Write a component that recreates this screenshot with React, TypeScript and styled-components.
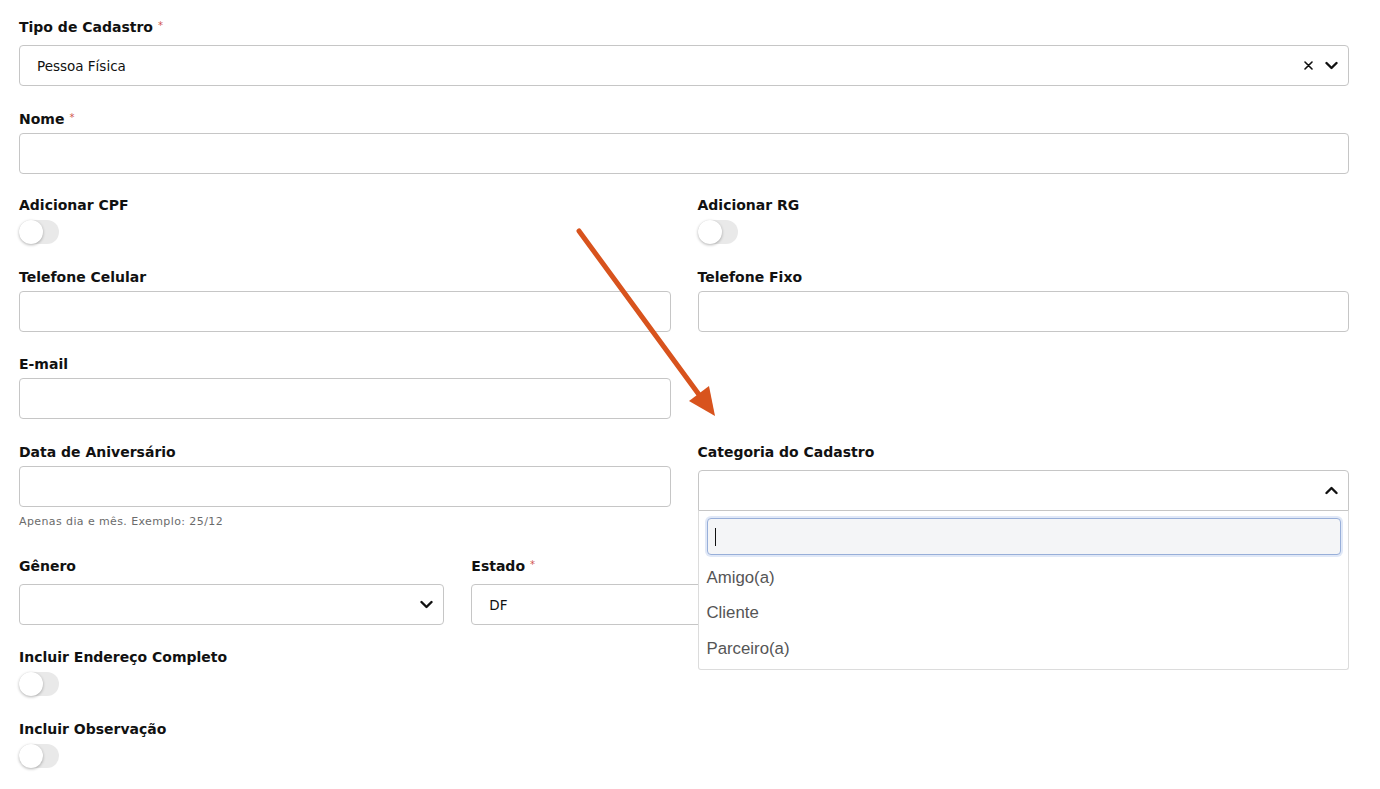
import React from 'react'
import styled, { createGlobalStyle } from 'styled-components'

const GlobalStyle = createGlobalStyle`
  body {
    margin: 0;
    background: #fff;
    font-family: "DejaVu Sans", "Open Sans", sans-serif;
    color: #111;
  }
  * { box-sizing: border-box; }
`

const Page = styled.div`
  position: relative;
  width: 1380px;
  min-height: 789px;
  padding: 17px 31px 0 19px;
`

const Row = styled.div<{ $cols: number }>`
  display: grid;
  grid-template-columns: repeat(${p => p.$cols}, 1fr);
  column-gap: 27px;
`

const Field = styled.div<{ $mb?: number }>`
  display: flex;
  flex-direction: column;
  margin-bottom: ${p => p.$mb ?? 22}px;
`

const Label = styled.label`
  font-size: 14px;
  font-weight: bold;
  line-height: 20px;
  height: 20px;
  margin-bottom: 4px;
  color: #111;
  white-space: nowrap;
`

const Star = styled.span`
  color: #d0534f;
  font-size: 10px;
  font-weight: normal;
  vertical-align: top;
  margin-left: 5px;
  position: relative;
  top: -1px;
`

const TextInput = styled.div`
  height: 41px;
  border: 1px solid #c6c6c6;
  border-radius: 4px;
  background: #fff;
`

const SelectWrap = styled.div`
  position: relative;
  margin-top: 4px;
`

const SelectBox = styled.div<{ $open?: boolean }>`
  height: 41px;
  border: 1px solid #c6c6c6;
  border-radius: ${p => (p.$open ? '4px 4px 0 0' : '4px')};
  background: #fff;
  display: flex;
  align-items: center;
  padding: 0 9px 0 17px;
  font-size: 13.5px;
  color: #111;
`

const Value = styled.span`
  flex: 1;
`

const Clear = styled.span`
  width: 14px;
  display: flex;
  justify-content: center;
  margin-right: 8px;
`

const Chevron = styled.span`
  width: 16px;
  display: flex;
  justify-content: center;
`

const Help = styled.div`
  margin-top: 7px;
  font-size: 11px;
  line-height: 15px;
  letter-spacing: 0.4px;
  color: #6b6b6b;
`

const Toggle = styled.div`
  margin-top: 1px;
  width: 40px;
  height: 24px;
  border-radius: 12px;
  background: #e9e9e9;
  position: relative;
  &::after {
    content: '';
    position: absolute;
    left: 0;
    top: 0;
    width: 24px;
    height: 24px;
    border-radius: 50%;
    background: #fff;
    box-shadow: 0 1px 3px rgba(0, 0, 0, 0.3);
  }
`

const Menu = styled.div`
  position: absolute;
  top: 100%;
  left: 0;
  right: 0;
  z-index: 5;
  background: #fff;
  border: 1px solid #dcdcdc;
  border-top: none;
  border-radius: 0 0 3px 3px;
  padding: 7px 7px 2px 8px;
`

const Search = styled.div`
  height: 37px;
  border: 1px solid #98afd9;
  border-radius: 4px;
  background: #f4f5f7;
  box-shadow: 0 0 0 2px rgba(130, 165, 225, 0.25);
  display: flex;
  align-items: center;
  padding-left: 7px;
  margin-bottom: 5px;
`

const Caret = styled.span`
  width: 1px;
  height: 18px;
  background: #111;
`

const Option = styled.div`
  height: 35.5px;
  display: flex;
  align-items: center;
  font-family: "Liberation Sans", Arial, sans-serif;
  font-size: 16.8px;
  color: #555;
`

const Arrow = styled.svg`
  position: absolute;
  left: 0;
  top: 0;
  pointer-events: none;
`

const ChevronDown = () => (
  <svg width="13" height="9" viewBox="0 0 13 9">
    <path d="M1.5 2 L6.5 7 L11.5 2" fill="none" stroke="#111" strokeWidth="2.4" strokeLinecap="round" strokeLinejoin="round" />
  </svg>
)

const ChevronUp = () => (
  <svg width="13" height="9" viewBox="0 0 13 9">
    <path d="M1.5 7 L6.5 2 L11.5 7" fill="none" stroke="#111" strokeWidth="2.4" strokeLinecap="round" strokeLinejoin="round" />
  </svg>
)

const ClearIcon = () => (
  <svg width="9" height="9" viewBox="0 0 9 9">
    <path d="M1 1 L8 8 M8 1 L1 8" stroke="#111" strokeWidth="1.6" strokeLinecap="round" />
  </svg>
)

type SelectProps = { value?: string; clearable?: boolean; open?: boolean; children?: React.ReactNode }

function Select({ value, clearable, open, children }: SelectProps) {
  return (
    <SelectWrap>
      <SelectBox $open={open}>
        <Value>{value}</Value>
        {clearable && <Clear><ClearIcon /></Clear>}
        <Chevron>{open ? <ChevronUp /> : <ChevronDown />}</Chevron>
      </SelectBox>
      {children}
    </SelectWrap>
  )
}

const categorias = ['Amigo(a)', 'Cliente', 'Parceiro(a)']

export default function App() {
  return (
    <>
      <GlobalStyle />
      <Page>
        <Field $mb={23}>
          <Label>Tipo de Cadastro<Star>*</Star></Label>
          <Select value="Pessoa Física" clearable />
        </Field>

        <Field $mb={21}>
          <Label>Nome<Star>*</Star></Label>
          <TextInput />
        </Field>

        <Row $cols={2}>
          <Field $mb={23}>
            <Label>Adicionar CPF</Label>
            <Toggle />
          </Field>
          <Field $mb={23}>
            <Label>Adicionar RG</Label>
            <Toggle />
          </Field>
        </Row>

        <Row $cols={2}>
          <Field $mb={22}>
            <Label>Telefone Celular</Label>
            <TextInput />
          </Field>
          <Field $mb={22}>
            <Label>Telefone Fixo</Label>
            <TextInput />
          </Field>
        </Row>

        <Row $cols={2}>
          <Field $mb={23}>
            <Label>E-mail</Label>
            <TextInput />
          </Field>
        </Row>

        <Row $cols={2}>
          <Field $mb={27}>
            <Label>Data de Aniversário</Label>
            <TextInput />
            <Help>Apenas dia e mês. Exemplo: 25/12</Help>
          </Field>
          <Field $mb={27}>
            <Label>Categoria do Cadastro</Label>
            <Select open>
              <Menu>
                <Search><Caret /></Search>
                {categorias.map(c => (
                  <Option key={c}>{c}</Option>
                ))}
              </Menu>
            </Select>
          </Field>
        </Row>

        <Row $cols={3}>
          <Field $mb={22}>
            <Label>Gênero</Label>
            <Select />
          </Field>
          <Field $mb={22}>
            <Label>Estado<Star>*</Star></Label>
            <Select value="DF" />
          </Field>
        </Row>

        <Field $mb={23}>
          <Label>Incluir Endereço Completo</Label>
          <Toggle />
        </Field>

        <Field $mb={20}>
          <Label>Incluir Observação</Label>
          <Toggle />
        </Field>

        <Arrow width="1380" height="789" viewBox="0 0 1380 789">
          <line x1="579" y1="231" x2="700" y2="396" stroke="#d8531d" strokeWidth="5" strokeLinecap="round" />
          <polygon points="715,416 689,401 709,386" fill="#d8531d" />
        </Arrow>
      </Page>
    </>
  )
}
